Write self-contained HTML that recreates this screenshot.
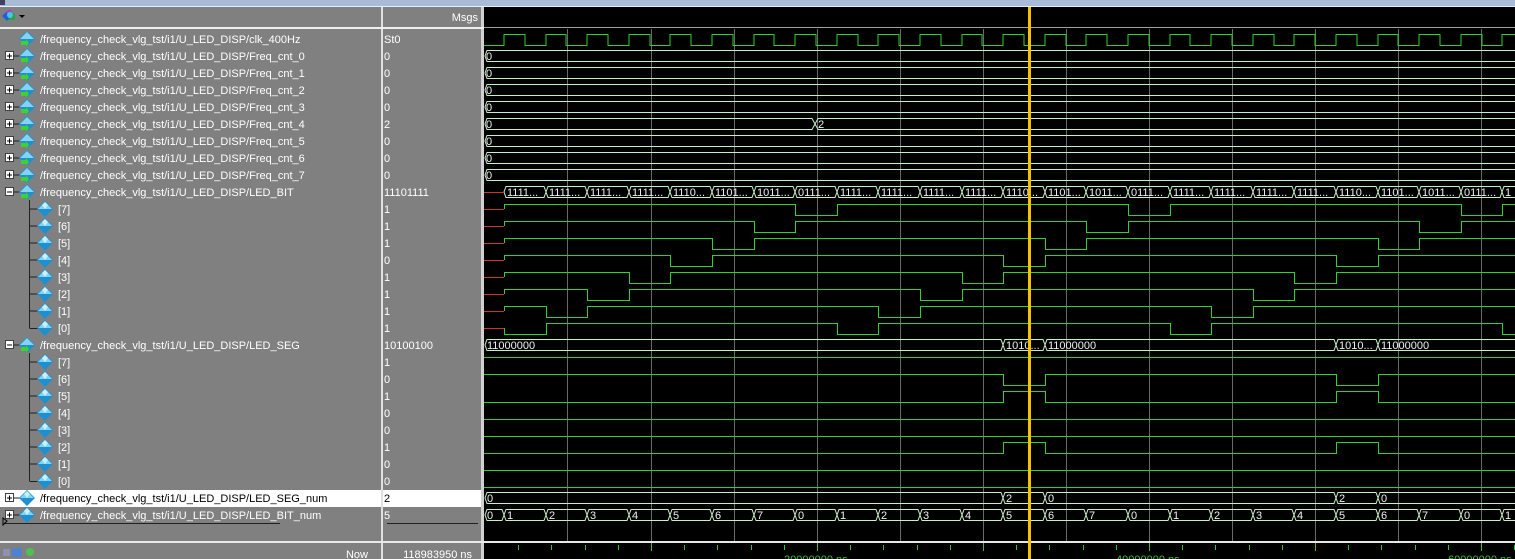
<!DOCTYPE html>
<html><head><meta charset="utf-8"><style>
html,body{margin:0;padding:0;background:#000;width:1515px;height:559px;overflow:hidden}
svg{display:block}
text{font-family:"Liberation Sans",sans-serif;font-size:11px}
</style></head><body>
<svg width="1515" height="559" viewBox="0 0 1515 559" xmlns="http://www.w3.org/2000/svg">
<defs>
<symbol id="ic" viewBox="0 0 16 16"><polygon points="8,0 16,8 8,16 0,8" fill="#1f8fd0"/><polygon points="8,1 15,8 8,8 1,8" fill="#7fd4f8"/><polygon points="8,1 11,4 8,8 5,4" fill="#c8f0ff"/></symbol>
<symbol id="ica" viewBox="0 0 16 16"><polygon points="8,0 16,8 8,16 0,8" fill="#1f8fd0"/><polygon points="8,1 15,8 8,8 1,8" fill="#7fd4f8"/><polygon points="2,10 7,10 7,8 10,12 7,16 7,14 2,14" fill="#40d030"/></symbol>
</defs>
<!-- top strip -->
<rect x="0" y="0" width="1515" height="7" fill="#a8bcd8"/>
<rect x="0" y="6" width="1515" height="1" fill="#e8eef8"/>
<rect x="0" y="0" width="5" height="5" fill="#404060"/>
<!-- panels -->
<rect x="0" y="7" width="381" height="552" fill="#808080"/>
<rect x="383" y="7" width="98" height="552" fill="#808080"/>
<rect x="381" y="7" width="2" height="552" fill="#e0e0e0"/>
<rect x="481" y="7" width="3" height="552" fill="#d0d0d0"/>
<rect x="484" y="7" width="1031" height="534" fill="#000"/>
<rect x="0" y="27" width="484" height="2" fill="#f0f0f0"/>
<rect x="484" y="27" width="1031" height="1" fill="#a0a0a0"/>
<rect x="0" y="541" width="1515" height="2" fill="#e8e8e8"/>
<rect x="484" y="543" width="1031" height="16" fill="#000"/>
<!-- header icon -->
<polygon points="2,16 7,11 12,16 7,21" fill="#2060d0"/><polygon points="6,12 10,9 13,13 9,16" fill="#b040c0"/><rect x="9" y="13" width="6" height="7" fill="#30a040"/><circle cx="10" cy="15" r="3" fill="#40c8f0"/>
<polygon points="19,15 25,15 22,18" fill="#000"/>
<text x="478" y="21" text-anchor="end" fill="#fff">Msgs</text>
<!-- highlighted row -->
<rect x="0" y="490" width="381" height="17" fill="#fff"/>
<rect x="383" y="490" width="98" height="17" fill="#fff"/>
<!-- plus/minus boxes -->
<g fill="#fff" stroke="#404040" stroke-width="1">
<rect x="5.5" y="51.5" width="8" height="8"/><rect x="5.5" y="68.5" width="8" height="8"/><rect x="5.5" y="85.5" width="8" height="8"/><rect x="5.5" y="102.5" width="8" height="8"/><rect x="5.5" y="119.5" width="8" height="8"/><rect x="5.5" y="136.5" width="8" height="8"/><rect x="5.5" y="153.5" width="8" height="8"/><rect x="5.5" y="170.5" width="8" height="8"/><rect x="5.5" y="187.5" width="8" height="8"/><rect x="5.5" y="340.5" width="8" height="8"/><rect x="5.5" y="493.5" width="8" height="8"/><rect x="5.5" y="510.5" width="8" height="8"/>
</g>
<g stroke="#000" stroke-width="1">
<path d="M7 56h5M9.5 53.5v5M7 73h5M9.5 70.5v5M7 90h5M9.5 87.5v5M7 107h5M9.5 104.5v5M7 124h5M9.5 121.5v5M7 141h5M9.5 138.5v5M7 158h5M9.5 155.5v5M7 175h5M9.5 172.5v5M7 192h5M7 345h5M7 498h5M9.5 495.5v5M7 515h5M9.5 512.5v5"/>
</g>
<g stroke="#202020" stroke-width="1" fill="none">
<path d="M13.5 56h6M13.5 73h6M13.5 90h6M13.5 107h6M13.5 124h6M13.5 141h6M13.5 158h6M13.5 175h6M13.5 192h6M13.5 345h6M13.5 498h6M13.5 515h6"/>
<path d="M29.5 200V328M29.5 209h8M29.5 226h8M29.5 243h8M29.5 260h8M29.5 277h8M29.5 294h8M29.5 311h8M29.5 328.5h8"/>
<path d="M29.5 353V481M29.5 362h8M29.5 379h8M29.5 396h8M29.5 413h8M29.5 430h8M29.5 447h8M29.5 464h8M29.5 481.5h8"/>
<path d="M5 523.5h275M387 523.5h91"/>
</g>
<polygon points="3,518 7,521 3,525" fill="none" stroke="#000"/>
<!-- icons -->
<use href="#ica" x="19" y="31" width="16" height="16"/>
<use href="#ica" x="19" y="48" width="16" height="16"/><use href="#ica" x="19" y="65" width="16" height="16"/><use href="#ica" x="19" y="82" width="16" height="16"/><use href="#ica" x="19" y="99" width="16" height="16"/><use href="#ica" x="19" y="116" width="16" height="16"/><use href="#ica" x="19" y="133" width="16" height="16"/><use href="#ica" x="19" y="150" width="16" height="16"/><use href="#ica" x="19" y="167" width="16" height="16"/>
<use href="#ica" x="19" y="184" width="16" height="16"/><use href="#ica" x="19" y="337" width="16" height="16"/>
<use href="#ic" x="19" y="490" width="16" height="16"/><use href="#ic" x="19" y="507" width="16" height="16"/>
<g>
<use href="#ic" x="37" y="201" width="16" height="16"/><use href="#ic" x="37" y="218" width="16" height="16"/><use href="#ic" x="37" y="235" width="16" height="16"/><use href="#ic" x="37" y="252" width="16" height="16"/><use href="#ic" x="37" y="269" width="16" height="16"/><use href="#ic" x="37" y="286" width="16" height="16"/><use href="#ic" x="37" y="303" width="16" height="16"/><use href="#ic" x="37" y="320" width="16" height="16"/>
<use href="#ic" x="37" y="354" width="16" height="16"/><use href="#ic" x="37" y="371" width="16" height="16"/><use href="#ic" x="37" y="388" width="16" height="16"/><use href="#ic" x="37" y="405" width="16" height="16"/><use href="#ic" x="37" y="422" width="16" height="16"/><use href="#ic" x="37" y="439" width="16" height="16"/><use href="#ic" x="37" y="456" width="16" height="16"/><use href="#ic" x="37" y="473" width="16" height="16"/>
</g>
<!-- names -->
<g fill="#fff">
<text x="40" y="43">/frequency_check_vlg_tst/i1/U_LED_DISP/clk_400Hz</text>
<text x="40" y="60">/frequency_check_vlg_tst/i1/U_LED_DISP/Freq_cnt_0</text>
<text x="40" y="77">/frequency_check_vlg_tst/i1/U_LED_DISP/Freq_cnt_1</text>
<text x="40" y="94">/frequency_check_vlg_tst/i1/U_LED_DISP/Freq_cnt_2</text>
<text x="40" y="111">/frequency_check_vlg_tst/i1/U_LED_DISP/Freq_cnt_3</text>
<text x="40" y="128">/frequency_check_vlg_tst/i1/U_LED_DISP/Freq_cnt_4</text>
<text x="40" y="145">/frequency_check_vlg_tst/i1/U_LED_DISP/Freq_cnt_5</text>
<text x="40" y="162">/frequency_check_vlg_tst/i1/U_LED_DISP/Freq_cnt_6</text>
<text x="40" y="179">/frequency_check_vlg_tst/i1/U_LED_DISP/Freq_cnt_7</text>
<text x="40" y="196">/frequency_check_vlg_tst/i1/U_LED_DISP/LED_BIT</text>
<text x="58" y="213">[7]</text><text x="58" y="230">[6]</text><text x="58" y="247">[5]</text><text x="58" y="264">[4]</text><text x="58" y="281">[3]</text><text x="58" y="298">[2]</text><text x="58" y="315">[1]</text><text x="58" y="332">[0]</text>
<text x="40" y="349">/frequency_check_vlg_tst/i1/U_LED_DISP/LED_SEG</text>
<text x="58" y="366">[7]</text><text x="58" y="383">[6]</text><text x="58" y="400">[5]</text><text x="58" y="417">[4]</text><text x="58" y="434">[3]</text><text x="58" y="451">[2]</text><text x="58" y="468">[1]</text><text x="58" y="485">[0]</text>
<text x="40" y="502" fill="#000">/frequency_check_vlg_tst/i1/U_LED_DISP/LED_SEG_num</text>
<text x="40" y="519">/frequency_check_vlg_tst/i1/U_LED_DISP/LED_BIT_num</text>
</g>
<!-- values -->
<g fill="#fff">
<text x="384" y="43">St0</text>
<text x="384" y="60">0</text><text x="384" y="77">0</text><text x="384" y="94">0</text><text x="384" y="111">0</text><text x="384" y="128">2</text><text x="384" y="145">0</text><text x="384" y="162">0</text><text x="384" y="179">0</text>
<text x="384" y="196">11101111</text>
<text x="384" y="213">1</text><text x="384" y="230">1</text><text x="384" y="247">1</text><text x="384" y="264">0</text><text x="384" y="281">1</text><text x="384" y="298">1</text><text x="384" y="315">1</text><text x="384" y="332">1</text>
<text x="384" y="349">10100100</text>
<text x="384" y="366">1</text><text x="384" y="383">0</text><text x="384" y="400">1</text><text x="384" y="417">0</text><text x="384" y="434">0</text><text x="384" y="451">1</text><text x="384" y="468">0</text><text x="384" y="485">0</text>
<text x="384" y="502" fill="#000">2</text>
<text x="384" y="519">5</text>
</g>
<!-- bottom bar -->
<rect x="3" y="549" width="7" height="7" fill="#9090b0"/><rect x="12" y="548" width="10" height="9" fill="#5080d0"/><circle cx="30" cy="552" r="4" fill="#50c050"/>
<text x="368" y="558" text-anchor="end" fill="#fff">Now</text>
<text x="472" y="558" text-anchor="end" fill="#fff">118983950 ns</text>
<!-- grid -->
<g stroke="#6a6a6a" stroke-width="1">
<path d="M567.5 29V541M651.5 29V541M734.5 29V541M817.5 29V541M900.5 29V541M983.5 29V541M1066.5 29V541M1149.5 29V541M1232.5 29V541M1315.5 29V541M1398.5 29V541M1481.5 29V541"/>
</g>
<!-- clk -->
<path fill="none" stroke="#30d030" stroke-width="1" d="M484 45.5H504V34.5H525V45.5H546V34.5H566V45.5H587V34.5H608V45.5H629V34.5H650V45.5H670V34.5H691V45.5H712V34.5H733V45.5H754V34.5H774V45.5H795V34.5H816V45.5H837V34.5H858V45.5H878V34.5H899V45.5H920V34.5H941V45.5H962V34.5H982V45.5H1003V34.5H1024V45.5H1045V34.5H1066V45.5H1086V34.5H1107V45.5H1128V34.5H1149V45.5H1170V34.5H1190V45.5H1211V34.5H1232V45.5H1253V34.5H1274V45.5H1294V34.5H1315V45.5H1336V34.5H1357V45.5H1378V34.5H1398V45.5H1419V34.5H1440V45.5H1461V34.5H1482V45.5H1502V34.5H1515"/>
<!-- bus rows -->
<g fill="none" stroke="#c8f0c8" stroke-width="1">
<path d="M1515 50.5H487L485 56L487 61.5H1515M1515 67.5H487L485 73L487 78.5H1515M1515 84.5H487L485 90L487 95.5H1515M1515 101.5H487L485 107L487 112.5H1515"/>
<path d="M487 118.5H812L815 124L812 129.5H487L485 124ZM818 118.5H1515M818 129.5H1515M815 124L818 118.5M815 124L818 129.5"/>
<path d="M1515 135.5H487L485 141L487 146.5H1515M1515 152.5H487L485 158L487 163.5H1515M1515 169.5H487L485 175L487 180.5H1515"/>
<!-- LED_BIT bus -->
<path d="M506 186.5H544L546 192L544 197.5H506L504 192Z M548 186.5H585L587 192L585 197.5H548L546 192Z M589 186.5H627L629 192L627 197.5H589L587 192Z M631 186.5H668L670 192L668 197.5H631L629 192Z M672 186.5H710L712 192L710 197.5H672L670 192Z M714 186.5H752L754 192L752 197.5H714L712 192Z M756 186.5H793L795 192L793 197.5H756L754 192Z M797 186.5H835L837 192L835 197.5H797L795 192Z M839 186.5H876L878 192L876 197.5H839L837 192Z M880 186.5H918L920 192L918 197.5H880L878 192Z M922 186.5H960L962 192L960 197.5H922L920 192Z M964 186.5H1001L1003 192L1001 197.5H964L962 192Z M1005 186.5H1043L1045 192L1043 197.5H1005L1003 192Z M1047 186.5H1084L1086 192L1084 197.5H1047L1045 192Z M1088 186.5H1126L1128 192L1126 197.5H1088L1086 192Z M1130 186.5H1168L1170 192L1168 197.5H1130L1128 192Z M1172 186.5H1209L1211 192L1209 197.5H1172L1170 192Z M1213 186.5H1251L1253 192L1251 197.5H1213L1211 192Z M1255 186.5H1292L1294 192L1292 197.5H1255L1253 192Z M1296 186.5H1334L1336 192L1334 197.5H1296L1294 192Z M1338 186.5H1376L1378 192L1376 197.5H1338L1336 192Z M1380 186.5H1417L1419 192L1417 197.5H1380L1378 192Z M1421 186.5H1459L1461 192L1459 197.5H1421L1419 192Z M1463 186.5H1500L1502 192L1500 197.5H1463L1461 192Z M1515 186.5H1504L1502 192L1504 197.5H1515"/>
<!-- LED_SEG bus -->
<path d="M487 339.5H1001L1003 345L1001 350.5H487L485 345Z M1005 339.5H1043L1045 345L1043 350.5H1005L1003 345Z M1047 339.5H1334L1336 345L1334 350.5H1047L1045 345Z M1338 339.5H1376L1378 345L1376 350.5H1338L1336 345Z M1515 339.5H1380L1378 345L1380 350.5H1515"/>
<!-- LED_SEG_num -->
<path d="M487 492.5H1001L1003 498L1001 503.5H487L485 498Z M1005 492.5H1043L1045 498L1043 503.5H1005L1003 498Z M1047 492.5H1334L1336 498L1334 503.5H1047L1045 498Z M1338 492.5H1376L1378 498L1376 503.5H1338L1336 498Z M1515 492.5H1380L1378 498L1380 503.5H1515"/>
<!-- LED_BIT_num -->
<path d="M487 509.5H502L504 515L502 520.5H487L485 515Z M506 509.5H544L546 515L544 520.5H506L504 515Z M548 509.5H585L587 515L585 520.5H548L546 515Z M589 509.5H627L629 515L627 520.5H589L587 515Z M631 509.5H668L670 515L668 520.5H631L629 515Z M672 509.5H710L712 515L710 520.5H672L670 515Z M714 509.5H752L754 515L752 520.5H714L712 515Z M756 509.5H793L795 515L793 520.5H756L754 515Z M797 509.5H835L837 515L835 520.5H797L795 515Z M839 509.5H876L878 515L876 520.5H839L837 515Z M880 509.5H918L920 515L918 520.5H880L878 515Z M922 509.5H960L962 515L960 520.5H922L920 515Z M964 509.5H1001L1003 515L1001 520.5H964L962 515Z M1005 509.5H1043L1045 515L1043 520.5H1005L1003 515Z M1047 509.5H1084L1086 515L1084 520.5H1047L1045 515Z M1088 509.5H1126L1128 515L1126 520.5H1088L1086 515Z M1130 509.5H1168L1170 515L1168 520.5H1130L1128 515Z M1172 509.5H1209L1211 515L1209 520.5H1172L1170 515Z M1213 509.5H1251L1253 515L1251 520.5H1213L1211 515Z M1255 509.5H1292L1294 515L1292 520.5H1255L1253 515Z M1296 509.5H1334L1336 515L1334 520.5H1296L1294 515Z M1338 509.5H1376L1378 515L1376 520.5H1338L1336 515Z M1380 509.5H1417L1419 515L1417 520.5H1380L1378 515Z M1421 509.5H1459L1461 515L1459 520.5H1421L1419 515Z M1463 509.5H1500L1502 515L1500 520.5H1463L1461 515Z M1515 509.5H1504L1502 515L1504 520.5H1515"/>
</g>
<!-- bus labels -->
<g fill="#f0f0f0">
<text x="486" y="60">0</text><text x="486" y="77">0</text><text x="486" y="94">0</text><text x="486" y="111">0</text><text x="486" y="128">0</text><text x="818" y="128">2</text><text x="486" y="145">0</text><text x="486" y="162">0</text><text x="486" y="179">0</text>
<text x="507" y="196">1111...</text><text x="549" y="196">1111...</text><text x="590" y="196">1111...</text><text x="632" y="196">1111...</text><text x="673" y="196">1110...</text><text x="715" y="196">1101...</text><text x="757" y="196">1011...</text><text x="798" y="196">0111...</text>
<text x="840" y="196">1111...</text><text x="881" y="196">1111...</text><text x="923" y="196">1111...</text><text x="965" y="196">1111...</text><text x="1006" y="196">1110...</text><text x="1048" y="196">1101...</text><text x="1089" y="196">1011...</text><text x="1131" y="196">0111...</text>
<text x="1173" y="196">1111...</text><text x="1214" y="196">1111...</text><text x="1256" y="196">1111...</text><text x="1297" y="196">1111...</text><text x="1339" y="196">1110...</text><text x="1381" y="196">1101...</text><text x="1422" y="196">1011...</text><text x="1464" y="196">0111...</text><text x="1505" y="196">1</text>
<text x="487" y="349">11000000</text><text x="1006" y="349">1010...</text><text x="1048" y="349">11000000</text><text x="1339" y="349">1010...</text><text x="1381" y="349">11000000</text>
<text x="487" y="502">0</text><text x="1006" y="502">2</text><text x="1048" y="502">0</text><text x="1339" y="502">2</text><text x="1381" y="502">0</text>
<text x="487" y="519">0</text><text x="507" y="519">1</text><text x="549" y="519">2</text><text x="590" y="519">3</text><text x="632" y="519">4</text><text x="673" y="519">5</text><text x="715" y="519">6</text><text x="757" y="519">7</text><text x="798" y="519">0</text><text x="840" y="519">1</text><text x="881" y="519">2</text><text x="923" y="519">3</text><text x="965" y="519">4</text><text x="1006" y="519">5</text><text x="1048" y="519">6</text><text x="1089" y="519">7</text><text x="1131" y="519">0</text><text x="1173" y="519">1</text><text x="1214" y="519">2</text><text x="1256" y="519">3</text><text x="1297" y="519">4</text><text x="1339" y="519">5</text><text x="1381" y="519">6</text><text x="1422" y="519">7</text><text x="1464" y="519">0</text><text x="1505" y="519">1</text>
</g>
<!-- red X segments -->
<g stroke="#d03030" stroke-width="1">
<path d="M484 192.5H504M484 209.5H504M484 226.5H504M484 243.5H504M484 260.5H504M484 277.5H504M484 294.5H504M484 311.5H504M484 328.5H504"/>
</g>
<!-- LED_BIT bits -->
<g fill="none" stroke="#30d030" stroke-width="1">
<path d="M504.5 209V204.5H795.5V215.5H837.5V204.5H1128.5V215.5H1170.5V204.5H1461.5V215.5H1502.5V204.5H1515"/>
<path d="M504.5 226V221.5H754.5V232.5H795.5V221.5H1086.5V232.5H1128.5V221.5H1419.5V232.5H1461.5V221.5H1515"/>
<path d="M504.5 243V238.5H712.5V249.5H754.5V238.5H1045.5V249.5H1086.5V238.5H1378.5V249.5H1419.5V238.5H1515"/>
<path d="M504.5 260V255.5H670.5V266.5H712.5V255.5H1003.5V266.5H1045.5V255.5H1336.5V266.5H1378.5V255.5H1515"/>
<path d="M504.5 277V272.5H629.5V283.5H670.5V272.5H962.5V283.5H1003.5V272.5H1294.5V283.5H1336.5V272.5H1515"/>
<path d="M504.5 294V289.5H587.5V300.5H629.5V289.5H920.5V300.5H962.5V289.5H1253.5V300.5H1294.5V289.5H1515"/>
<path d="M504.5 311V306.5H546.5V317.5H587.5V306.5H878.5V317.5H920.5V306.5H1211.5V317.5H1253.5V306.5H1515"/>
<path d="M504.5 328V334.5H546.5V323.5H837.5V334.5H878.5V323.5H1170.5V334.5H1211.5V323.5H1502.5V334.5H1515"/>
<!-- LED_SEG bits -->
<path d="M484 357.5H1515"/>
<path d="M484 374.5H1003.5V385.5H1045.5V374.5H1336.5V385.5H1378.5V374.5H1515"/>
<path d="M484 402.5H1003.5V391.5H1045.5V402.5H1336.5V391.5H1378.5V402.5H1515"/>
<path d="M484 419.5H1515M484 436.5H1515"/>
<path d="M484 453.5H1003.5V442.5H1045.5V453.5H1336.5V442.5H1378.5V453.5H1515"/>
<path d="M484 470.5H1515M484 487.5H1515"/>
</g>
<!-- time axis -->
<g stroke="#30c030" stroke-width="1">
<path d="M518.5 545v5M551.5 545v5M585.5 545v5M618.5 545v5M651.5 543v8M684.5 545v5M717.5 545v5M751.5 545v5M784.5 545v5M817.5 543v8M850.5 545v5M883.5 545v5M917.5 545v5M950.5 545v5M983.5 543v8M1016.5 545v5M1049.5 545v5M1083.5 545v5M1116.5 545v5M1149.5 543v8M1182.5 545v5M1215.5 545v5M1249.5 545v5M1282.5 545v5M1315.5 543v8M1348.5 545v5M1381.5 545v5M1415.5 545v5M1448.5 545v5M1481.5 543v8M1514.5 545v5"/>
</g>
<g fill="#40c040" font-size="11">
<text x="784" y="563">20000000 ns</text><text x="1116" y="563">40000000 ns</text><text x="1448" y="563">60000000 ns</text>
</g>
<!-- cursor -->
<rect x="1028" y="7" width="3" height="552" fill="#f5c000"/>
</svg>
</body></html>
